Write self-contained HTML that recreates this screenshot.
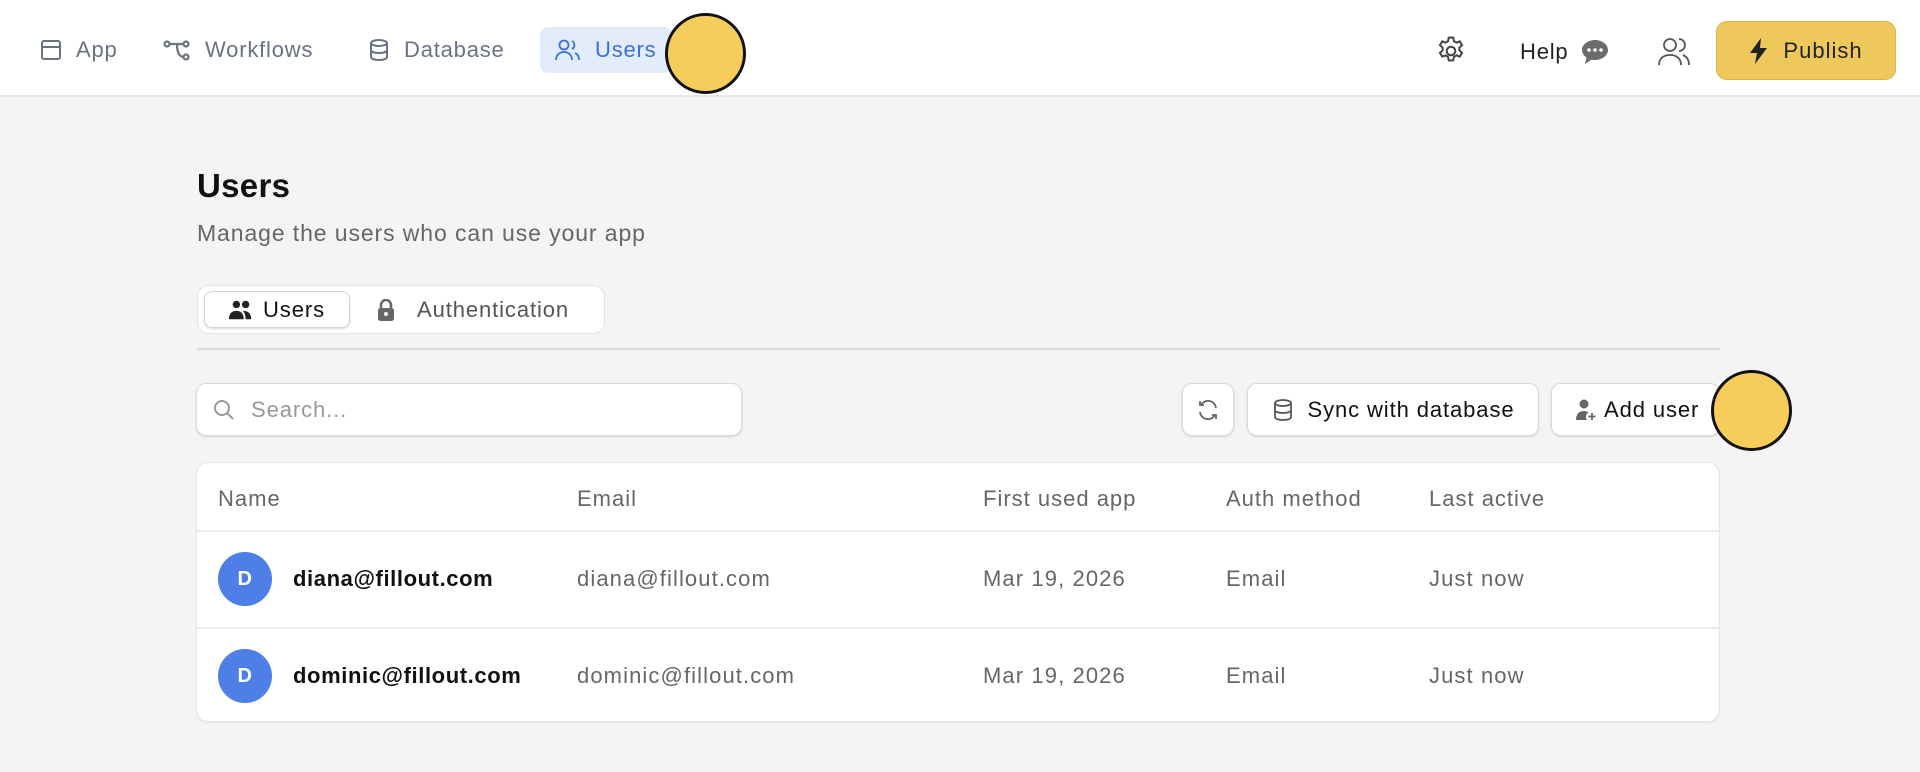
<!DOCTYPE html>
<html><head><meta charset="utf-8"><style>
*{box-sizing:border-box;margin:0;padding:0}
body{width:1920px;height:772px;background:#f4f4f4;font-family:"Liberation Sans",Arial,sans-serif;position:relative;overflow:hidden;color:#111;letter-spacing:.6px}
.a{position:absolute}
.hdr{left:0;top:0;width:1920px;height:97px;background:#fff;border-bottom:2px solid #e6e6e8}
.nav{top:27px;height:46px;display:flex;align-items:center;font-size:22px;color:#6b7280;letter-spacing:.8px}
.nav svg{margin-right:14px}
.circ{width:81px;height:81px;border-radius:50%;background:#f6cd5a;border:3px solid #111}
.btn{background:#fff;border:1.5px solid #d9d9d9;border-radius:10px;box-shadow:0 1px 2px rgba(0,0,0,.12);display:flex;align-items:center;justify-content:center;font-size:22px;color:#111;letter-spacing:.9px}
.th{font-size:22px;color:#666;top:486px;letter-spacing:1px}
.cell{font-size:22px;color:#666;letter-spacing:1.1px}
.av{width:54px;height:54px;border-radius:50%;background:#4e7fe6;color:#fff;font-size:20px;display:flex;align-items:center;justify-content:center;font-weight:bold}
.nm{font-size:22px;color:#111;font-weight:bold;letter-spacing:.6px}
</style></head><body>
<div class="a hdr"></div>
<div class="a nav" style="left:40px"><svg width="22" height="22" viewBox="0 0 22 22" fill="none" stroke="#6b7280" stroke-width="2"><rect x="2" y="2" width="18" height="18" rx="2"/><line x1="2" y1="8" x2="20" y2="8"/></svg>App</div>
<div class="a nav" style="left:163px"><svg width="28" height="22" viewBox="0 0 28 22" fill="none" stroke="#6b7280" stroke-width="2.2"><circle cx="4" cy="5" r="2.5"/><circle cx="23" cy="5" r="2.5"/><circle cx="23" cy="18" r="2.5"/><path d="M7 5h13M14 5c0 8 2 13 7 13"/></svg>Workflows</div>
<div class="a nav" style="left:368px"><svg width="22" height="24" viewBox="0 0 22 24" fill="none" stroke="#6b7280" stroke-width="2"><ellipse cx="11" cy="5" rx="8" ry="3"/><path d="M3 5v14c0 2 4 3 8 3s8-1 8-3V5M3 12c0 2 4 3 8 3s8-1 8-3"/></svg>Database</div>
<div class="a" style="left:540px;top:27px;width:132px;height:46px;background:#e3ecfb;border-radius:8px"></div>
<div class="a nav" style="left:555px;color:#3b6fe0"><svg width="26" height="24" viewBox="0 0 26 24" fill="none" stroke="#3b6fe0" stroke-width="1.8"><circle cx="9" cy="7" r="4.5"/><path d="M1 22c0-5 3.5-8 8-8s8 3 8 8M17 3a4.5 4.5 0 0 1 0 8M20 15c2.5 1 4 3.5 4 7"/></svg>Users</div>
<div class="a circ" style="left:665px;top:13px"></div>
<svg class="a" style="left:1435px;top:35px" width="32" height="32" viewBox="0 0 24 24" fill="none" stroke="#444" stroke-width="1.5"><path d="M10.3 2h3.4l.5 2.6 1.9 1.1 2.5-.9 1.7 2.9-2 1.7v2.2l2 1.7-1.7 2.9-2.5-.9-1.9 1.1-.5 2.6h-3.4l-.5-2.6-1.9-1.1-2.5.9-1.7-2.9 2-1.7v-2.2l-2-1.7 1.7-2.9 2.5.9 1.9-1.1z"/><circle cx="12" cy="12" r="3.2"/></svg>
<div class="a" style="left:1520px;top:39px;font-size:22px;color:#222;letter-spacing:.8px">Help</div>
<svg class="a" style="left:1581px;top:39px" width="28" height="26" viewBox="0 0 28 26"><path d="M14 1C7 1 1 5.5 1 11c0 3 1.7 5.6 4.4 7.4L4 25l6.5-4.3c1.1.2 2.3.3 3.5.3 7 0 13-4.5 13-10S21 1 14 1z" fill="#6b6b6b"/><circle cx="8" cy="11" r="1.8" fill="#fff"/><circle cx="14" cy="11" r="1.8" fill="#fff"/><circle cx="20" cy="11" r="1.8" fill="#fff"/></svg>
<svg class="a" style="left:1658px;top:36px" width="32" height="30" viewBox="0 0 32 30" fill="none" stroke="#555" stroke-width="1.8"><circle cx="12" cy="9" r="6"/><path d="M1 29c0-7 5-10 11-10s11 3 11 10M21 3a6 6 0 0 1 0 12M25 19c3.5 1.5 6 4.5 6 10"/></svg>
<div class="a" style="left:1716px;top:21px;width:180px;height:59px;background:#efc85c;border:1.5px solid #d9b24a;border-radius:11px;display:flex;align-items:center;justify-content:center;font-size:22px;color:#222;letter-spacing:1px"><svg width="20" height="26" viewBox="0 0 20 26" style="margin-right:14px"><path d="M12 0L1 15h7l-2 11L18 10h-7z" fill="#222"/></svg>Publish</div>

<div class="a" style="left:197px;top:167px;font-size:33px;font-weight:bold;color:#111;letter-spacing:.3px">Users</div>
<div class="a" style="left:197px;top:220px;font-size:23px;color:#666;letter-spacing:.9px">Manage the users who can use your app</div>
<div class="a" style="left:197px;top:285px;width:408px;height:49px;background:#fff;border:1.5px solid #e4e4e4;border-radius:12px"></div>
<div class="a" style="left:204px;top:291px;width:146px;height:37px;background:#fff;border:1.5px solid #d4d4d4;border-radius:8px;box-shadow:0 1px 2px rgba(0,0,0,.15);display:flex;align-items:center;justify-content:center;font-size:22px;color:#111;letter-spacing:.9px"><svg width="24" height="22" viewBox="0 0 26 22" style="margin-right:10px"><circle cx="8" cy="5" r="4" fill="#222"/><circle cx="18" cy="5" r="4" fill="#222"/><path d="M0 21c0-6 3-9 8-9s8 3 8 9z M15 12c5 0 9 2 9 9h-6c0-4-1-7-3-9z" fill="#222"/></svg>Users</div>
<div class="a" style="left:377px;top:297px;font-size:22px;color:#555;display:flex;align-items:center;letter-spacing:.9px"><svg width="18" height="22" viewBox="0 0 18 22" style="margin-right:22px"><path d="M4 10V6a5 5 0 0 1 10 0v4" fill="none" stroke="#666" stroke-width="2.5"/><rect x="1" y="9" width="16" height="13" rx="2.5" fill="#666"/><circle cx="9" cy="15" r="2" fill="#fff"/></svg>Authentication</div>
<div class="a" style="left:197px;top:348px;width:1523px;height:2px;background:#dcdcdc"></div>

<div class="a btn" style="left:196px;top:383px;width:546px;height:53px;justify-content:flex-start;padding-left:16px;color:#999"><svg width="22" height="22" viewBox="0 0 22 22" fill="none" stroke="#999" stroke-width="2" style="margin-right:16px"><circle cx="9" cy="9" r="7"/><path d="M14 14l6 6"/></svg>Search...</div>
<div class="a btn" style="left:1182px;top:383px;width:52px;height:53px"><svg width="24" height="24" viewBox="0 0 24 24" fill="none" stroke="#666" stroke-width="1.8"><path d="M20 10A8 8 0 0 0 5 7M4 3v4h4M4 14a8 8 0 0 0 15 3M20 21v-4h-4"/></svg></div>
<div class="a btn" style="left:1247px;top:383px;width:292px;height:53px"><svg width="22" height="24" viewBox="0 0 22 24" fill="none" stroke="#555" stroke-width="1.8" style="margin-right:14px"><ellipse cx="11" cy="5" rx="8" ry="3"/><path d="M3 5v14c0 2 4 3 8 3s8-1 8-3V5M3 12c0 2 4 3 8 3s8-1 8-3"/></svg>Sync with database</div>
<div class="a btn" style="left:1551px;top:383px;width:169px;height:53px;justify-content:flex-start;padding-left:24px"><svg width="20" height="24" viewBox="0 0 20 24" style="margin-right:8px"><circle cx="8" cy="6" r="4.5" fill="#666"/><path d="M0 22c0-6 3-9 8-9 2 0 3.5.5 4.5 1.5A5 5 0 0 0 11 22z" fill="#666"/><path d="M16 15v7M12.5 18.5h7" stroke="#666" stroke-width="1.8"/></svg>Add user</div>
<div class="a circ" style="left:1711px;top:370px"></div>

<div class="a" style="left:196px;top:462px;width:1524px;height:260px;background:#fff;border:1.5px solid #e4e4e4;border-radius:12px;box-shadow:0 1px 2px rgba(0,0,0,.06)"></div>
<div class="a" style="left:197px;top:530px;width:1522px;height:2px;background:#ececec"></div>
<div class="a" style="left:197px;top:627px;width:1522px;height:2px;background:#ececec"></div>
<div class="a th" style="left:218px">Name</div>
<div class="a th" style="left:577px">Email</div>
<div class="a th" style="left:983px">First used app</div>
<div class="a th" style="left:1226px">Auth method</div>
<div class="a th" style="left:1429px">Last active</div>

<div class="a av" style="left:218px;top:552px">D</div>
<div class="a nm" style="left:293px;top:566px">diana@fillout.com</div>
<div class="a cell" style="left:577px;top:566px">diana@fillout.com</div>
<div class="a cell" style="left:983px;top:566px">Mar 19, 2026</div>
<div class="a cell" style="left:1226px;top:566px">Email</div>
<div class="a cell" style="left:1429px;top:566px">Just now</div>

<div class="a av" style="left:218px;top:649px">D</div>
<div class="a nm" style="left:293px;top:663px">dominic@fillout.com</div>
<div class="a cell" style="left:577px;top:663px">dominic@fillout.com</div>
<div class="a cell" style="left:983px;top:663px">Mar 19, 2026</div>
<div class="a cell" style="left:1226px;top:663px">Email</div>
<div class="a cell" style="left:1429px;top:663px">Just now</div>
</body></html>
